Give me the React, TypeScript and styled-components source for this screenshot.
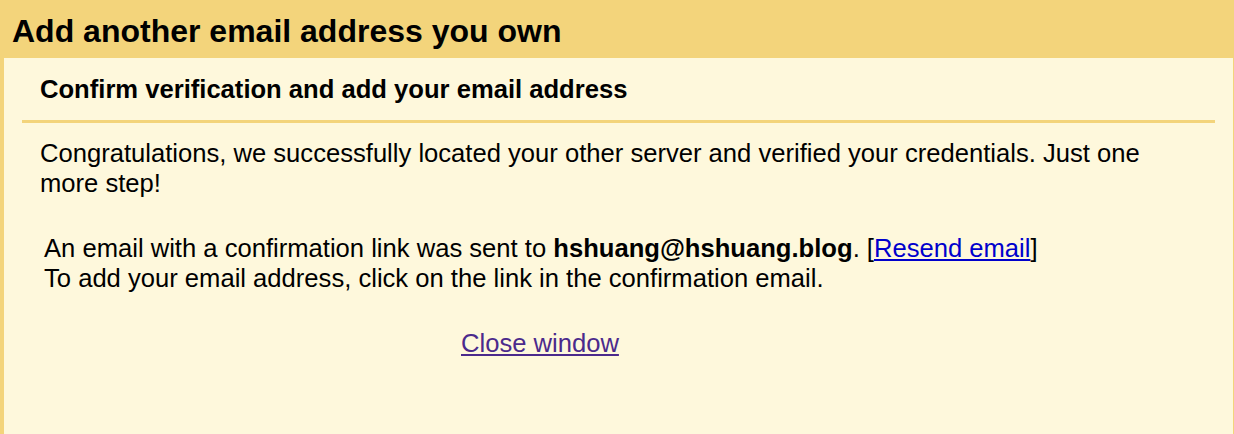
import * as React from 'react';
import styled, { createGlobalStyle } from 'styled-components';

const GlobalStyle = createGlobalStyle`
    html, body {
        margin: 0;
        padding: 0;
        background: #f3d47b;
    }
    body {
        font-family: "Liberation Sans", Arial, Helvetica, sans-serif;
        color: #000;
    }
`;

const Page = styled.div`
    display: flex;
    flex-direction: column;
    height: 434px;
    overflow: hidden;
    background: #f3d47b;
`;
const Title = styled.h1`
    margin: 0;
    padding: 5px 0 0 12px;
    height: 53px;
    line-height: 53px;
    font-size: 32px;
    font-weight: bold;
    white-space: nowrap;
`;
const Panel = styled.div`
    flex: 1;
    margin: 0 1px 0 4px;
    background: #fef8dc;
`;
const SectionHead = styled.h2`
    margin: 0 18px;
    padding: 16px 18px;
    border-bottom: 3px solid #f3d47b;
    font-size: 25.6px;
    line-height: 30px;
    font-weight: bold;
`;
const Message = styled.p`
    margin: 15px 0 0;
    padding: 0 80px 0 36px;
    font-size: 25.6px;
    line-height: 30px;
`;
const Info = styled.div`
    margin-top: 35px;
    padding-left: 40px;
    font-size: 25.6px;
    line-height: 30px;
`;
const Address = styled.b`
    font-weight: bold;
`;
const Link = styled.a<{ $visited?: boolean }>`
    color: ${(p) => (p.$visited ? '#4b2a8c' : '#0000cc')};
    text-decoration: underline;
    text-underline-offset: 2px;
    cursor: pointer;
`;
const Footer = styled.div`
    margin-top: 35px;
    padding-left: 457px;
    font-size: 25.6px;
    line-height: 30px;
`;

export default function App() {
    return (
        <>
            <GlobalStyle />
            <Page>
                <Title>Add another email address you own</Title>
                <Panel>
                    <SectionHead>Confirm verification and add your email address</SectionHead>
                    <Message>
                        Congratulations, we successfully located your other server and verified your credentials. Just one more step!
                    </Message>
                    <Info>
                        An email with a confirmation link was sent to <Address>hshuang@hshuang.blog</Address>. [<Link href="#">Resend email</Link>]
                        <br />
                        To add your email address, click on the link in the confirmation email.
                    </Info>
                    <Footer>
                        <Link href="#" $visited>Close window</Link>
                    </Footer>
                </Panel>
            </Page>
        </>
    );
}
